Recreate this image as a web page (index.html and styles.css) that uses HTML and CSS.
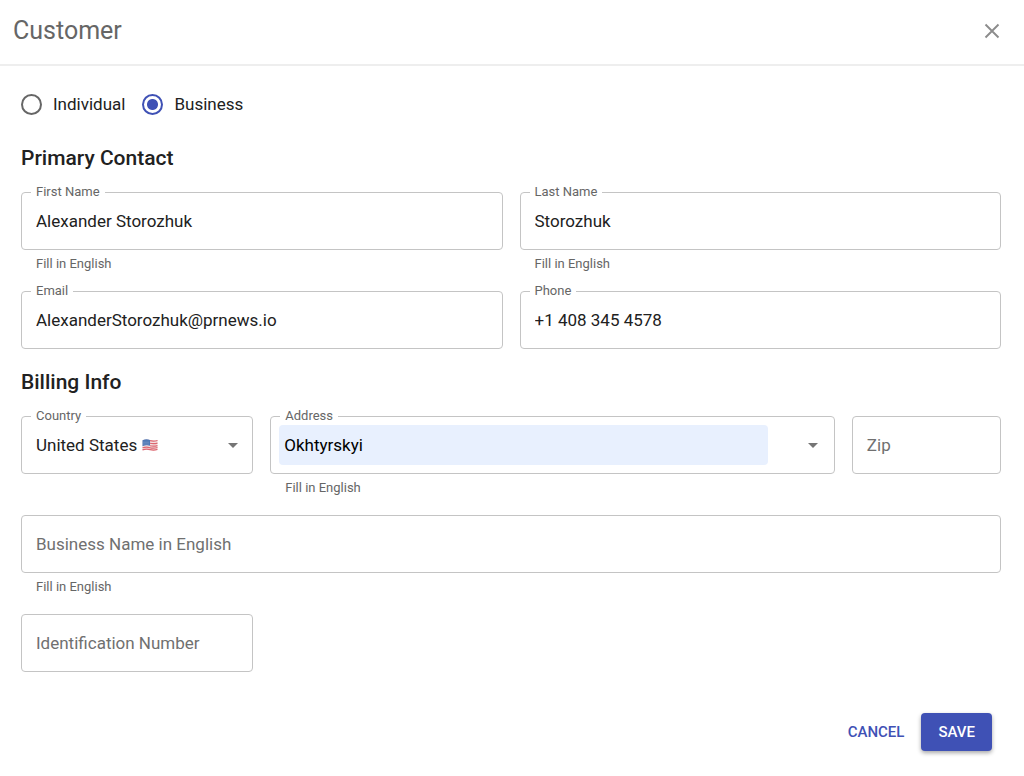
FILE: index.html
```
<!DOCTYPE html>
<html lang="en">
<head>
    <meta charset="UTF-8">
    <meta name="viewport" content="width=device-width, initial-scale=1.0">
    <title>Customer</title>
    <link rel="stylesheet" href="styles.css">
</head>
<body>
    <div class="dialog">
        <header class="header">
            <h1>Customer</h1>
            <button type="button" class="close" aria-label="Close">
                <svg width="16" height="16" viewBox="0 0 16 16"><path d="M1.5 1.5 14.5 14.5M14.5 1.5 1.5 14.5" fill="none" stroke="#8c8c8c" stroke-width="1.9"/></svg>
            </button>
        </header>

        <form class="customer-form">
            <div class="customer-type">
                <label class="radio"><input type="radio" name="type" value="individual">Individual</label>
                <label class="radio"><input type="radio" name="type" value="business" checked>Business</label>
            </div>

            <h2>Primary Contact</h2>
            <div class="grid">
                <div class="item half">
                    <div class="field">
                        <label for="first-name">First Name</label>
                        <input type="text" id="first-name" value="Alexander Storozhuk">
                    </div>
                    <p class="helper">Fill in English</p>
                </div>
                <div class="item half">
                    <div class="field">
                        <label for="last-name">Last Name</label>
                        <input type="text" id="last-name" value="Storozhuk">
                    </div>
                    <p class="helper">Fill in English</p>
                </div>
                <div class="item half">
                    <div class="field">
                        <label for="email">Email</label>
                        <input type="email" id="email" value="AlexanderStorozhuk@prnews.io">
                    </div>
                </div>
                <div class="item half">
                    <div class="field">
                        <label for="phone">Phone</label>
                        <input type="tel" id="phone" value="+1 408 345 4578">
                    </div>
                </div>
            </div>

            <h2>Billing Info</h2>
            <div class="grid">
                <div class="item quarter">
                    <div class="field">
                        <label for="country">Country</label>
                        <select id="country">
                            <option>United States</option>
                        </select>
                        <svg class="flag" width="16" height="12" viewBox="0 0 16 12">
                            <path d="M.5 1.2C4-.2 6 .4 8 1s4 1 7.500 0v9.600c-3.500 1.200-5.500.8-7.500.2s-4-.8-7.500.4z" fill="#f3dfe0"/>
                            <path d="M8 1.6c2 .6 4 .8 7.500-.1M8 4.200c2 .6 4 .8 7.500-.1M8 6.700c2 .6 4 .8 7.500-.1M.5 8.800c3.500-1.200 5.500-.8 7.500-.1s4 .9 7.500-.2M.5 10.900c3.500-1.200 5.500-.8 7.500-.3s4 .9 7.500-.2" fill="none" stroke="#dc6670" stroke-width="1.2"/>
                            <path d="M.5 1.2C4-.2 6 .4 8 1v5.800c-2-.6-4-.8-7.500.4z" fill="#4f78b5"/>
                            <path d="M1.500 3.200h6M1.500 5h6" stroke="#9db4d8" stroke-width=".7" stroke-dasharray="1 1"/>
                        </svg>
                        <svg class="arrow" width="10" height="5" viewBox="0 0 10 5"><path d="M0 0h10L5 5z" fill="#757575"/></svg>
                    </div>
                </div>
                <div class="item address">
                    <div class="field autofilled">
                        <label for="address">Address</label>
                        <input type="text" id="address" value="Okhtyrskyi">
                        <button type="button" class="open" aria-label="Open">
                            <svg width="10" height="5" viewBox="0 0 10 5"><path d="M0 0h10L5 5z" fill="#757575"/></svg>
                        </button>
                    </div>
                    <p class="helper">Fill in English</p>
                </div>
                <div class="item zip">
                    <div class="field empty">
                        <label for="zip">Zip</label>
                        <input type="text" id="zip">
                    </div>
                </div>
                <div class="item full">
                    <div class="field empty">
                        <label for="business-name">Business Name in English</label>
                        <input type="text" id="business-name">
                    </div>
                    <p class="helper">Fill in English</p>
                </div>
                <div class="item quarter">
                    <div class="field empty">
                        <label for="identification">Identification Number</label>
                        <input type="text" id="identification">
                    </div>
                </div>
            </div>

            <div class="actions">
                <button type="button" class="button">CANCEL</button>
                <button type="submit" class="button primary">SAVE</button>
            </div>
        </form>
    </div>
</body>
</html>
```
FILE: styles.css
```
* {
    box-sizing: border-box;
}
body {
    font-family: Roboto, "Liberation Sans", sans-serif;
    font-size: 17px;
    line-height: 20px;
    background-color: white;
    margin: 0;
    color: #212121;
}
.header {
    display: flex;
    align-items: center;
    justify-content: space-between;
    height: 66px;
    padding: 0 20px 2px 13px;
    border-bottom: 2px solid #eee;
}
h1 {
    margin: 0;
    font-size: 25px;
    font-weight: 400;
    line-height: 32px;
    color: #666;
}
button {
    font-family: inherit;
    border: none;
    background: none;
    cursor: pointer;
}
.close {
    display: flex;
    padding: 4px;
}
.customer-form {
    padding: 24px 23px 24px 21px;
}
.customer-type {
    display: flex;
    gap: 17px;
    height: 28px;
    margin-bottom: 26px;
}
.radio {
    display: flex;
    align-items: center;
    gap: 11px;
}
.radio input {
    appearance: none;
    width: 21px;
    height: 21px;
    margin: 0;
    border: 2px solid #666;
    border-radius: 50%;
}
.radio input:checked {
    border-color: #3f51b5;
    background: radial-gradient(circle, #3f51b5 5px, transparent 6px);
}
h2 {
    margin: 19px 0 20px;
    font-size: 21px;
    font-weight: 500;
    line-height: 28px;
}
.grid {
    display: grid;
    grid-template-columns: repeat(12, 1fr);
    column-gap: 17px;
}
.half {
    grid-column: span 6;
}
.quarter {
    grid-column: span 3;
}
.address {
    grid-column: span 7;
}
.zip {
    grid-column: span 2;
}
.full {
    grid-column: span 12;
}
.field {
    position: relative;
    display: flex;
    align-items: center;
    height: 58px;
    border: 1px solid #c4c4c4;
    border-radius: 4px;
}
.field label {
    position: absolute;
    top: -9px;
    left: 9px;
    padding: 0 5px;
    background-color: white;
    font-size: 13px;
    line-height: 16px;
    color: #666;
}
.field.empty label {
    top: 18px;
    font-size: 17px;
    line-height: 20px;
    color: #707070;
}
.field input,
.field select {
    flex: 1;
    min-width: 0;
    height: 100%;
    padding: 0 14px;
    border: none;
    border-radius: 4px;
    outline: none;
    background: none;
    font-family: inherit;
    font-size: 17px;
    color: #212121;
}
.field select {
    appearance: none;
}
.flag {
    position: absolute;
    top: 22px;
    left: 120px;
}
.arrow {
    position: absolute;
    top: 26px;
    right: 14px;
}
.field.autofilled {
    padding: 8px;
}
.field.autofilled input {
    padding: 0 5px;
    background-color: #e8f0fe;
    color: black;
}
.open {
    display: flex;
    width: 58px;
    padding: 0 8px;
    justify-content: flex-end;
}
.helper {
    margin: 6px 15px 19px;
    font-size: 13px;
    line-height: 16px;
    color: #666;
}
.actions {
    display: flex;
    justify-content: flex-end;
    gap: 8px;
    padding: 41px 9px 0 0;
}
.button {
    height: 38px;
    padding: 0 9px;
    border-radius: 4px;
    font-size: 15px;
    font-weight: 500;
    color: #3f51b5;
}
.primary {
    padding: 0 17px;
    background-color: #3f51b5;
    color: white;
    box-shadow: 0 2px 4px rgba(0, 0, 0, 0.35);
}
```
